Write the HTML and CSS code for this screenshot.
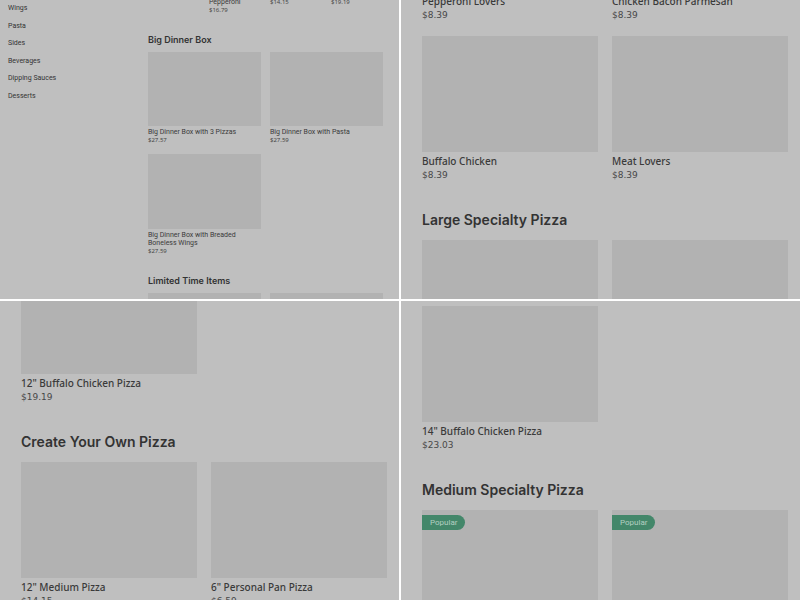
FILE: index.html
```html
<!DOCTYPE html>
<html lang="en">
<head>
    <meta charset="UTF-8">
    <meta name="viewport" content="width=device-width, initial-scale=1.0">
    <title>Pizza Menu</title>
    <link rel="stylesheet" href="styles.css">
</head>
<body>
  <main class="board">
    <section class="panel panel-overview">
      <nav class="categories">
        <a href="#wings">Wings</a>
        <a href="#pasta">Pasta</a>
        <a href="#sides">Sides</a>
        <a href="#beverages">Beverages</a>
        <a href="#sauces">Dipping Sauces</a>
        <a href="#desserts">Desserts</a>
      </nav>

      <div class="menu menu-small">
        <div class="items items-four">
          <div class="item"></div>
          <div class="item">
            <p class="name">Pepperoni</p>
            <p class="price">$16.79</p>
          </div>
          <div class="item">
            <p class="price">$14.15</p>
          </div>
          <div class="item">
            <p class="price">$19.19</p>
          </div>
        </div>

        <h2>Big Dinner Box</h2>
        <div class="items">
          <div class="item">
            <div class="thumb"></div>
            <p class="name">Big Dinner Box with 3 Pizzas</p>
            <p class="price">$27.57</p>
          </div>
          <div class="item">
            <div class="thumb"></div>
            <p class="name">Big Dinner Box with Pasta</p>
            <p class="price">$27.59</p>
          </div>
          <div class="item">
            <div class="thumb"></div>
            <p class="name">Big Dinner Box with Breaded Boneless Wings</p>
            <p class="price">$27.59</p>
          </div>
        </div>

        <h2>Limited Time Items</h2>
        <div class="items">
          <div class="item"><div class="thumb"></div></div>
          <div class="item"><div class="thumb"></div></div>
        </div>
      </div>
    </section>

    <section class="panel">
      <div class="menu menu-personal">
        <div class="items">
          <div class="item">
            <p class="name">Pepperoni Lovers</p>
            <p class="price">$8.39</p>
          </div>
          <div class="item">
            <p class="name">Chicken Bacon Parmesan</p>
            <p class="price">$8.39</p>
          </div>
          <div class="item">
            <div class="thumb"></div>
            <p class="name">Buffalo Chicken</p>
            <p class="price">$8.39</p>
          </div>
          <div class="item">
            <div class="thumb"></div>
            <p class="name">Meat Lovers</p>
            <p class="price">$8.39</p>
          </div>
        </div>

        <h2>Large Specialty Pizza</h2>
        <div class="items">
          <div class="item"><div class="thumb"></div></div>
          <div class="item"><div class="thumb"></div></div>
        </div>
      </div>
    </section>

    <section class="panel">
      <div class="menu menu-medium">
        <div class="items">
          <div class="item">
            <div class="thumb"></div>
            <p class="name">12" Buffalo Chicken Pizza</p>
            <p class="price">$19.19</p>
          </div>
        </div>

        <h2>Create Your Own Pizza</h2>
        <div class="items">
          <div class="item">
            <div class="thumb"></div>
            <p class="name">12" Medium Pizza</p>
            <p class="price">$14.15</p>
          </div>
          <div class="item">
            <div class="thumb"></div>
            <p class="name">6" Personal Pan Pizza</p>
            <p class="price">$6.59</p>
          </div>
        </div>
      </div>
    </section>

    <section class="panel">
      <div class="menu menu-large">
        <div class="items">
          <div class="item">
            <div class="thumb"></div>
            <p class="name">14" Buffalo Chicken Pizza</p>
            <p class="price">$23.03</p>
          </div>
        </div>

        <h2>Medium Specialty Pizza</h2>
        <div class="items">
          <div class="item">
            <div class="thumb"><span class="badge">Popular</span></div>
          </div>
          <div class="item">
            <div class="thumb"><span class="badge">Popular</span></div>
          </div>
        </div>
      </div>
    </section>
  </main>
</body>
</html>
```

FILE: styles.css
```css
* {
    margin: 0;
    padding: 0;
    box-sizing: border-box;
}

body {
    font-family: Roboto, sans-serif;
    background: #ffffff;
    color: #3a3a3a;
}

/* Four menu panels with a white divider between them */
.board {
    display: grid;
    grid-template-columns: 1fr 1fr;
    grid-template-rows: 1fr 1fr;
    gap: 2px;
    height: 100vh;
}

.panel {
    background: #bfbfbf;
    overflow: hidden;
    min-width: 0;
    min-height: 0;
}

.menu {
    padding: 0 12px 0 21px;
}

/* Each panel is scrolled to a different point of its menu */
.menu-personal {
    margin-top: -6px;
}

.menu-medium {
    margin-top: -43px;
}

.menu-large {
    padding-top: 5px;
}

.items {
    display: grid;
    grid-template-columns: 1fr 1fr;
    gap: 14px;
}

.thumb {
    position: relative;
    aspect-ratio: 176 / 116;
    background: #b2b2b2;
    margin-bottom: 2px;
}

.name {
    font-family: "Noto Sans", sans-serif;
    font-size: 10px;
    font-weight: 500;
    line-height: 14px;
}

.price {
    font-family: "DejaVu Sans", sans-serif;
    font-size: 9px;
    line-height: 14px;
    color: #484848;
}

h2 {
    font-family: Inter, sans-serif;
    font-size: 14px;
    font-weight: 600;
    line-height: 20px;
    color: #333333;
    margin: 28px 0 10px;
}

.badge {
    position: absolute;
    top: 5px;
    left: 0;
    padding: 0 8px;
    font-size: 8px;
    line-height: 15px;
    color: #b4cfc2;
    background: #43876a;
    border-radius: 0 8px 8px 0;
}

/* Overview panel: category list beside a compact menu */
.panel-overview {
    display: grid;
    grid-template-columns: 148px 1fr;
}

.categories {
    display: flex;
    flex-direction: column;
    justify-content: space-between;
    height: 96px;
    margin: 4px 0 0 8px;
}

.categories a {
    font-size: 7px;
    line-height: 8px;
    color: #333333;
    text-decoration: none;
}

.menu-small {
    padding: 0 16px 0 0;
    margin-top: -2px;
}

.menu-small .items {
    gap: 9px;
}

.menu-small .items-four {
    grid-template-columns: repeat(4, 1fr);
}

.menu-small .name {
    font-family: Roboto, sans-serif;
    font-size: 7px;
    font-weight: 400;
    line-height: 8px;
}

.menu-small .price {
    font-family: "Noto Sans", sans-serif;
    font-size: 6px;
    line-height: 9px;
}

.menu-small h2 {
    font-size: 9px;
    line-height: 12px;
    margin: 19px 0 6px;
}
```
